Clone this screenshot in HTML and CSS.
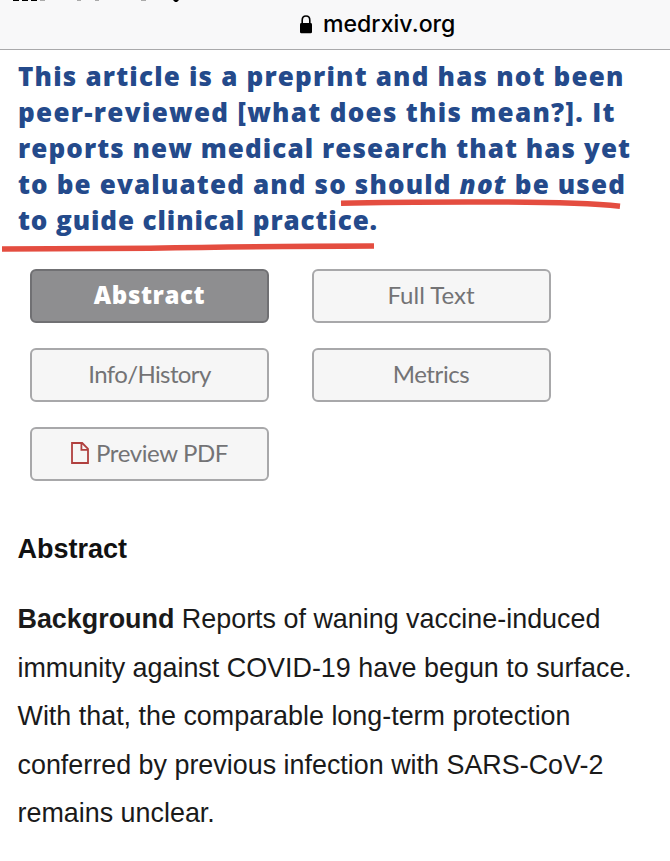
FILE: index.html
```
<!DOCTYPE html>
<html lang="en">

<head>
    <meta charset="UTF-8" />
    <meta name="viewport" content="width=device-width, initial-scale=1.0" />
    <title>medrxiv.org</title>
    <link rel="stylesheet" href="styles.css">
</head>

<body>
    <div class="address-bar">
        <svg class="status" width="200" height="3" viewBox="0 0 200 3">
            <path d="M13 0h6v1h-6zM22 0h6v1h-6zM31 0h6v1h-6zM173 0h6l-2 2h-2z" fill="#000" />
            <path d="M40 0h5v1h-5zM77 0h4v1h-4zM95 0h4v1h-4zM141 0h5v1h-5z" fill="#aaa" />
        </svg>
        <svg class="lock" width="12" height="19" viewBox="0 0 12 19">
            <path d="M2.2 9V5.2C2.2 2.6 3.8 1 6 1s3.8 1.6 3.8 4.2V9" fill="none" stroke="#000" stroke-width="1.6" />
            <rect x="0" y="8" width="12" height="10.3" rx="1.4" />
        </svg>
        <span class="domain">medrxiv.org</span>
    </div>

    <div class="notice">
        <span class="line line1">This article is a preprint and has not been</span>
        <span class="line line2">peer-reviewed [what does this mean?]. It</span>
        <span class="line line3">reports new medical research that has yet</span>
        <span class="line line4">to be evaluated and so should <em>not</em> be used</span>
        <span class="line line5">to guide clinical practice.</span>
        <!-- red marker strokes -->
        <svg class="marker" width="670" height="205" viewBox="0 50 670 205">
            <path d="M341 203.2Q400 201.8 490 202Q580 202 620 206.3" />
            <path d="M2 249L150 248.2Q250 246.4 374 246" />
        </svg>
    </div>

    <div class="tabs">
        <a class="tab active">Abstract</a>
        <a class="tab full">Full Text</a>
        <a class="tab info">Info/History</a>
        <a class="tab metrics">Metrics</a>
        <a class="tab pdf">
            <svg class="file" width="18" height="22" viewBox="0 0 18 22">
                <path d="M1 1H11.2L17 6.8V21H1zM10.4 1V7.8H17" />
            </svg>
            <span>Preview PDF</span>
        </a>
    </div>

    <div class="abstract">
        <h2>Abstract</h2>
        <p>
            <span class="line"><b>Background</b> Reports of waning vaccine-induced</span>
            <span class="line">immunity against COVID-19 have begun to surface.</span>
            <span class="line">With that, the comparable long-term protection</span>
            <span class="line">conferred by previous infection with SARS-CoV-2</span>
            <span class="line">remains unclear.</span>
        </p>
    </div>
</body>

</html>
```
FILE: styles.css
```
body {
    margin: 0;
    background-color: white;
    color: #1a1a1a;
    font-family: "Liberation Sans", Arial, sans-serif;
    overflow: hidden;
}

.address-bar {
    position: relative;
    display: flex;
    align-items: center;
    height: 50px;
    padding-left: 300px;
    box-sizing: border-box;
    border-bottom: 1px solid #a9a9ab;
    background-color: #f8f8f9;
}

.status {
    position: absolute;
    top: 0;
    left: 0;
}

.lock {
    margin: 0 11px 0 0;
}

.domain {
    padding-bottom: 1px;
    color: black;
    font-family: Inter, sans-serif;
    font-size: 23.1px;
    font-weight: 500;
}

.line {
    display: block;
    white-space: nowrap;
}

.notice {
    position: relative;
    height: 205px;
    padding: 8px 0 0 18px;
    box-sizing: border-box;
    color: #244a8b;
    font-family: "Open Sans", sans-serif;
    font-size: 26px;
    font-weight: 800;
    line-height: 36px;
}

.line1 {
    letter-spacing: 1.19px;
}

.line2 {
    letter-spacing: 1.3px;
}

.line3 {
    letter-spacing: 1.08px;
}

.line4 {
    letter-spacing: 1.15px;
}

.line5 {
    letter-spacing: 0.9px;
}

.marker {
    position: absolute;
    top: 0;
    left: 0;
    fill: none;
    stroke: #e44d40;
    stroke-width: 5.5px;
}

.tabs {
    display: grid;
    grid-template-columns: 239px 239px;
    grid-auto-rows: 54px;
    gap: 25px 42.5px;
    padding: 14px 0 0 30px;
}

.tab {
    display: flex;
    align-items: center;
    justify-content: center;
    box-sizing: border-box;
    padding-bottom: 3px;
    border: 2px solid #a8a8aa;
    border-radius: 6px;
    background-color: #f6f6f6;
    color: #737375;
    font-family: Lato, sans-serif;
    font-size: 24px;
}

.active {
    border-color: #707073;
    background-color: #8e8e90;
    color: white;
    font-family: "Open Sans", sans-serif;
    font-weight: 800;
    letter-spacing: 0.6px;
}

.info {
    letter-spacing: -0.6px;
}

.metrics {
    letter-spacing: -0.4px;
}

.pdf {
    letter-spacing: -0.4px;
}

.file {
    margin-right: 7px;
    fill: none;
    stroke: #b0403f;
    stroke-width: 1.8px;
}

.abstract {
    padding-left: 17.5px;
}

.abstract h2 {
    margin: 53px 0 31px;
    font-size: 27px;
    line-height: 30px;
    color: #111;
}

.abstract p {
    margin: 0;
    font-size: 26.9px;
    line-height: 48.5px;
}
```
